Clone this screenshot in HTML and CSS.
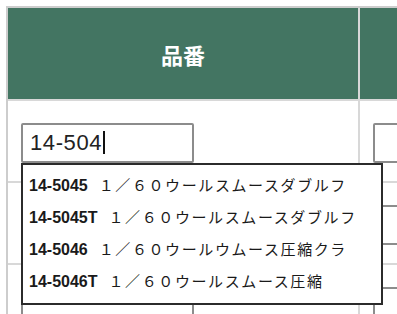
FILE: index.html
```html
<!DOCTYPE html>
<html lang="ja">

<head>
    <meta charset="UTF-8">
    <meta name="viewport" content="width=device-width, initial-scale=1.0">
    <title>品番検索</title>
    <link rel="stylesheet" href="styles.css">
</head>

<body>
    <table class="grid">
        <thead>
            <tr>
                <th class="col-code">品番</th>
                <th class="col-name"></th>
            </tr>
        </thead>
        <tbody>
            <tr>
                <td>
                    <div class="field">
                        <div class="input">14-504<span class="caret"></span></div>
                        <ul class="suggest">
                            <li><span class="code">14-5045</span><span class="name">１／６０ウールスムースダブルフ</span></li>
                            <li><span class="code">14-5045T</span><span class="name">１／６０ウールスムースダブルフ</span></li>
                            <li><span class="code">14-5046</span><span class="name">１／６０ウールウムース圧縮クラ</span></li>
                            <li><span class="code">14-5046T</span><span class="name">１／６０ウールスムース圧縮</span></li>
                        </ul>
                    </div>
                </td>
                <td><div class="input"></div></td>
            </tr>
            <tr>
                <td><div class="input"></div></td>
                <td><div class="input"></div></td>
            </tr>
            <tr>
                <td><div class="input"></div></td>
                <td><div class="input"></div></td>
            </tr>
        </tbody>
    </table>
</body>

</html>
```

FILE: styles.css
```css
* {
    margin: 0;
    padding: 0;
    box-sizing: border-box;
}

html,
body {
    height: 100%;
    overflow: hidden;
    background: #fff;
    font-family: 'Liberation Sans', 'Noto Sans CJK JP', sans-serif;
    color: #1a1a1a;
}

.grid {
    margin: 6px 0 0 6px;
    border-collapse: separate;
    border-spacing: 0;
    border-top: 2px solid #cdcdcd;
    border-left: 2px solid #cdcdcd;
    table-layout: fixed;
    width: 800px;
}

.grid th,
.grid td {
    border-right: 2px solid #d8d8d8;
    border-bottom: 2px solid #d8d8d8;
}

.grid th {
    height: 93px;
    background-color: #437562;
    color: #fff;
    font-family: 'Noto Sans CJK JP', sans-serif;
    font-size: 22px;
    font-weight: 700;
    text-align: center;
    vertical-align: middle;
}

.col-code {
    width: 352px;
}

.grid td {
    height: 82px;
    padding: 22px 13px 0;
    vertical-align: top;
}

.field {
    position: relative;
}

.input {
    width: 173px;
    height: 40px;
    border: 2px solid #8c8c8c;
    border-radius: 2px;
    padding-left: 7px;
    font-size: 22px;
    letter-spacing: 0.6px;
    line-height: 36px;
    color: #222;
    white-space: nowrap;
}

.caret {
    display: inline-block;
    width: 0;
    height: 23px;
    margin-left: 1px;
    border-left: 2px solid #111;
    vertical-align: -4px;
}

.suggest {
    position: absolute;
    top: 100%;
    left: 0;
    z-index: 2;
    width: 362px;
    padding: 4px 0 6px;
    border: 2px solid #2b2b2b;
    background: #fff;
    list-style: none;
}

.suggest li {
    padding-left: 6px;
    height: 32px;
    line-height: 32px;
    font-size: 15px;
    white-space: nowrap;
}

.suggest .code {
    font-size: 16px;
    font-weight: 700;
}

.suggest .name {
    margin-left: 11px;
    font-family: 'Noto Sans CJK JP', sans-serif;
    letter-spacing: 1.6px;
}
```
